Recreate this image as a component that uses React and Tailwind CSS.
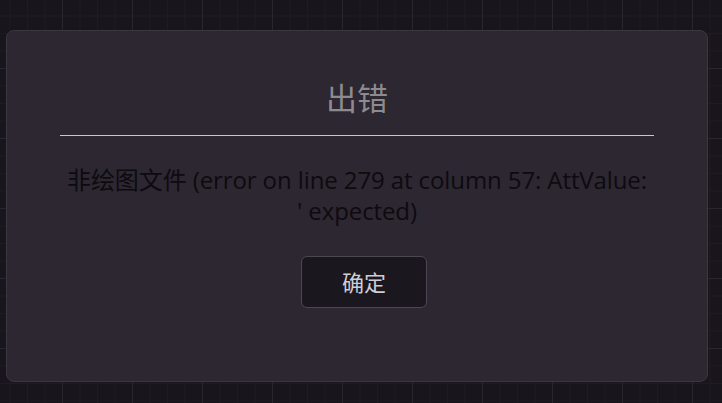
import React from 'react';

const App = () => {
  return (
    <div className="w-full h-[403px] overflow-hidden bg-[#18151d] bg-[linear-gradient(to_right,#2a262f_1px,transparent_1px),linear-gradient(to_bottom,#2a262f_1px,transparent_1px),linear-gradient(to_right,#1e1b23_1px,transparent_1px),linear-gradient(to_bottom,#1e1b23_1px,transparent_1px)] bg-[size:70px_70px,70px_70px,17.5px_17.5px,17.5px_17.5px] bg-[position:-8px_-2px,-8px_-2px,-8px_-2px,-8px_-2px] pt-[30px] pl-[6px]" style={{ fontFamily: '"Open Sans", "Noto Sans CJK SC", sans-serif' }}>
      <div className="w-[702px] h-[352px] rounded-lg border border-[#3b3741] bg-[#2c2731] px-[53px] flex flex-col items-center">
        <h1 className="mt-[49px] text-[31px] leading-[37px] text-[#8e8b90]">出错</h1>
        <div className="w-full mt-[18px] h-px bg-[#c9c6cc]" />
        <p className="mt-[28px] px-[4px] text-center text-[24px] leading-[31px] tracking-[-0.1px] text-[#0d0b10]">
          非绘图文件 (error on line 279 at column 57: AttValue: ' expected)
        </p>
        <button className="mt-[30px] ml-[14px] w-[126px] h-[52px] rounded-md border border-[#4c4852] bg-[#1a171f] text-[22px] text-[#cfcdd2]">
          确定
        </button>
      </div>
    </div>
  );
};

export default App;
